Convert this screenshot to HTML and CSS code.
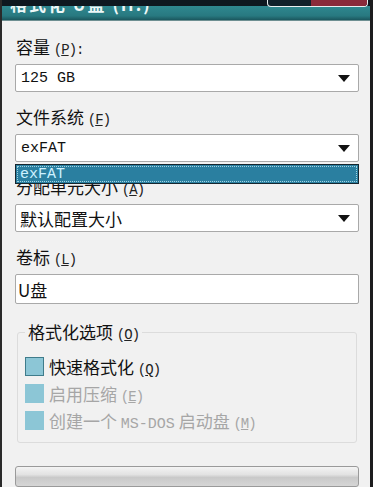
FILE: index.html
```html
<!DOCTYPE html>
<html lang="zh-CN">
  <head>
    <meta charset="UTF-8" />
    <meta name="viewport" content="width=device-width, initial-scale=1.0" />
    <title>格式化 U盘 (H:)</title>
    <link rel="stylesheet" href="styles.css">
  </head>
  <body>
    <div class="window">
      <div class="frame-top">
        <div class="caption-btns"><span class="close"></span></div>
      </div>
      <div class="titlebar">
        <span class="title">格式化 U盘 (H:)</span>
      </div>

      <div class="client">
        <div class="field">
          <label class="label">容量 <span class="key">(<u>P</u>):</span></label>
          <div class="combo">
            <span class="mono">125 GB</span>
            <svg class="arrow" width="12" height="7" viewBox="0 0 12 7"><path d="M0 0H12L6 7Z" fill="#111"/></svg>
          </div>
        </div>

        <div class="field drop">
          <label class="label">文件系统 <span class="key">(<u>F</u>)</span></label>
          <div class="combo">
            <span class="mono">exFAT</span>
            <svg class="arrow" width="12" height="7" viewBox="0 0 12 7"><path d="M0 0H12L6 7Z" fill="#111"/></svg>
          </div>
          <div class="popup"><span class="mono">exFAT</span></div>
        </div>

        <div class="field">
          <label class="label">分配单元大小 <span class="key">(<u>A</u>)</span></label>
          <div class="combo">
            <span>默认配置大小</span>
            <svg class="arrow" width="12" height="7" viewBox="0 0 12 7"><path d="M0 0H12L6 7Z" fill="#111"/></svg>
          </div>
        </div>

        <div class="field">
          <label class="label">卷标 <span class="key">(<u>L</u>)</span></label>
          <div class="textbox">U盘</div>
        </div>

        <fieldset class="options">
          <legend>格式化选项 <span class="key">(<u>O</u>)</span></legend>
          <div class="check">
            <span class="box"></span>
            <span>快速格式化 <span class="key">(<u>Q</u>)</span></span>
          </div>
          <div class="check off">
            <span class="box"></span>
            <span>启用压缩 <span class="key">(<u>E</u>)</span></span>
          </div>
          <div class="check off">
            <span class="box"></span>
            <span>创建一个 <span class="mono">MS-DOS</span> 启动盘 <span class="key">(<u>M</u>)</span></span>
          </div>
        </fieldset>

        <div class="progress"></div>
      </div>
    </div>
  </body>
</html>
```

FILE: styles.css
```css
* {
  margin: 0;
  padding: 0;
  box-sizing: border-box;
}

body {
  width: 373px;
  height: 487px;
  overflow: hidden;
  background: #1c1c1e;
  font-family: "Noto Sans CJK SC", "Noto Sans", sans-serif;
  font-size: 17px;
  color: #111;
}

.window {
  width: 370px;
  height: 487px;
  border-left: 2px solid #2a2a2a;
  background: #f1f1f1;
  display: flex;
  flex-direction: column;
}

.window > * {
  flex-shrink: 0;
}

.frame-top {
  height: 6px;
  background: #0e1820;
  display: flex;
  justify-content: flex-end;
  padding-right: 2px;
}

.caption-btns {
  width: 101px;
  height: 7px;
  border: 1px solid #e8eef0;
  border-top: none;
  border-radius: 0 0 4px 4px;
  background: #10202a;
  display: flex;
  justify-content: flex-end;
  position: relative;
  z-index: 1;
}

.close {
  width: 56px;
  height: 100%;
  background: #8a2a3a;
  border-radius: 0 0 3px 0;
}

.titlebar {
  height: 15px;
  overflow: hidden;
  background: linear-gradient(#2f8890, #287980 70%, #1b575e);
  border-bottom: 1px solid #6e8f92;
  padding-left: 8px;
}

.title {
  display: block;
  margin-top: -12px;
  line-height: 20px;
  font-weight: bold;
  color: #eef8f8;
  letter-spacing: 2px;
}

.client {
  display: flex;
  flex-direction: column;
  padding: 16px 11px 0 13px;
}

.field {
  display: flex;
  flex-direction: column;
  gap: 7px;
  margin-bottom: 15px;
}

.label {
  display: block;
  height: 20px;
  line-height: 20px;
  padding-left: 1px;
}

.key {
  font-family: "Liberation Mono", monospace;
  font-size: 14px;
  letter-spacing: -1px;
  line-height: 1;
  color: #222;
}

.mono {
  font-family: "Liberation Mono", "DejaVu Sans Mono", monospace;
  font-size: 15px;
}

.combo,
.textbox {
  height: 28px;
  background: #fff;
  border: 1px solid #a9a9a9;
  border-radius: 2px;
  display: flex;
  align-items: center;
  justify-content: space-between;
  padding: 0 8px 0 4px;
}

.combo .mono {
  padding-left: 1px;
}

.textbox {
  height: 30px;
  padding-left: 2px;
}

.drop {
  position: relative;
  z-index: 2;
}

.popup {
  position: absolute;
  left: 0;
  right: 0;
  top: calc(100% + 2px);
  height: 20px;
  background: #2a7fa0;
  border: 1px solid #16262e;
  outline: 1px dotted #9fd2e2;
  outline-offset: -3px;
  color: #cdf1ff;
  display: flex;
  align-items: center;
  padding-left: 4px;
}

.options {
  margin: 3px 2px 0;
  border: 1px solid #dcdcdc;
  border-radius: 3px;
  padding: 0 7px 8px;
  display: flex;
  flex-direction: column;
}

.options legend {
  height: 20px;
  line-height: 20px;
  padding: 0 3px;
}

.options legend + .check {
  margin-top: 11px;
}

.check {
  height: 27px;
  display: flex;
  align-items: center;
  gap: 5px;
}

.box {
  width: 19px;
  height: 19px;
  background: #8cc6d6;
  border: 1px solid #3f7c8b;
}

.check.off {
  color: #a6a6a6;
}

.check.off .key {
  color: #a6a6a6;
}

.check.off .box {
  border-color: #8cc6d6;
}

.progress {
  margin-top: 23px;
  height: 21px;
  border: 1px solid #9a9a9a;
  border-radius: 3px;
  background: linear-gradient(#f4f4f4, #e2e2e2 40%, #c9c9c9 55%, #d6d6d6);
}
```
